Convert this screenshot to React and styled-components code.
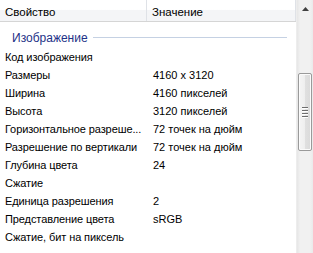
import React from "react";
import styled, { createGlobalStyle } from "styled-components";

const Global = createGlobalStyle`
  html, body { margin: 0; padding: 0; background: #fff; }
  body { width: 313px; height: 253px; overflow: hidden; font-family: "Liberation Sans", Arial, sans-serif; }
`;

const Frame = styled.div`
  display: flex;
  width: 313px;
  height: 253px;
  overflow: hidden;
  background: #fff;
`;

const ListArea = styled.div`
  flex: 1;
  display: flex;
  flex-direction: column;
  min-width: 0;
`;

const Header = styled.div`
  display: grid;
  grid-template-columns: 147px 149px 1fr;
  height: 22px;
  box-sizing: border-box;
  border-bottom: 1px solid #d5d5d5;
  background: linear-gradient(#ffffff 0%, #ffffff 45%, #f4f5f7 50%, #f4f5f7 100%);
`;

const HeaderCell = styled.div`
  display: flex;
  align-items: center;
  padding-left: 5px;
  padding-top: 3px;
  font-size: 11.5px;
  color: #000;
  border-right: ${(p) => (p.$noBorder ? "none" : "1px solid #dfe2e7")};
  white-space: nowrap;
  overflow: hidden;
`;

const Body = styled.div`
  display: flex;
  flex-direction: column;
  padding-top: 6px;
`;

const GroupRow = styled.div`
  display: flex;
  align-items: center;
  height: 20px;
  padding-left: 12px;
  padding-right: 9px;
  gap: 5px;
`;

const GroupTitle = styled.span`
  font-size: 12px;
  color: #1e3287;
  white-space: nowrap;
`;

const GroupLine = styled.div`
  flex: 1;
  height: 1px;
  background: #c5d1e3;
  margin-top: -2px;
`;

const Row = styled.div`
  display: grid;
  grid-template-columns: 148px 1fr;
  height: 18px;
  align-items: center;
  font-size: 11px;
  color: #000;
`;

const Name = styled.div`
  padding-left: 5px;
  white-space: nowrap;
  letter-spacing: -0.1px;
`;

const Value = styled.div`
  padding-left: 5px;
  white-space: nowrap;
`;

const ScrollBar = styled.div`
  width: 17px;
  display: flex;
  flex-direction: column;
  align-items: center;
  background: linear-gradient(90deg, #e6e6e6 0%, #f1f1f1 20%, #f1f1f1 80%, #eaeaea 100%);
  border-left: 1px solid #ededed;
  box-sizing: border-box;
`;

const ArrowButton = styled.div`
  height: 17px;
  width: 100%;
  display: flex;
  align-items: center;
  justify-content: center;
`;

const Thumb = styled.div`
  margin-top: 56px;
  width: 14px;
  height: 78px;
  box-sizing: border-box;
  border: 1px solid #9a9a9a;
  border-radius: 2px;
  background: linear-gradient(90deg, #f5f5f5 0%, #eeeeee 50%, #e0e0e0 51%, #dadada 100%);
  box-shadow: inset 0 0 0 1px #fbfbfb;
  display: flex;
  align-items: center;
  justify-content: center;
`;

const Grip = styled.div`
  display: flex;
  flex-direction: column;
  gap: 2px;
`;

const GripLine = styled.div`
  width: 6px;
  height: 1px;
  background: #6e6e6e;
  box-shadow: 0 1px 0 #ffffff;
`;

const rows = [
  ["Код изображения", ""],
  ["Размеры", "4160 x 3120"],
  ["Ширина", "4160 пикселей"],
  ["Высота", "3120 пикселей"],
  ["Горизонтальное разреше...", "72 точек на дюйм"],
  ["Разрешение по вертикали", "72 точек на дюйм"],
  ["Глубина цвета", "24"],
  ["Сжатие", ""],
  ["Единица разрешения", "2"],
  ["Представление цвета", "sRGB"],
  ["Сжатие, бит на пиксель", ""],
];

export default function App() {
  return (
    <>
      <Global />
      <Frame>
        <ListArea>
          <Header>
            <HeaderCell>Свойство</HeaderCell>
            <HeaderCell>Значение</HeaderCell>
            <HeaderCell $noBorder />
          </Header>
          <Body>
            <GroupRow>
              <GroupTitle>Изображение</GroupTitle>
              <GroupLine />
            </GroupRow>
            {rows.map(([n, v]) => (
              <Row key={n}>
                <Name>{n}</Name>
                <Value>{v}</Value>
              </Row>
            ))}
          </Body>
        </ListArea>
        <ScrollBar>
          <ArrowButton>
            <svg width="7" height="4" viewBox="0 0 7 4">
              <path d="M3.5 0 L7 4 L0 4 Z" fill="#404040" />
            </svg>
          </ArrowButton>
          <Thumb>
            <Grip>
              <GripLine />
              <GripLine />
              <GripLine />
              <GripLine />
            </Grip>
          </Thumb>
        </ScrollBar>
      </Frame>
    </>
  );
}
